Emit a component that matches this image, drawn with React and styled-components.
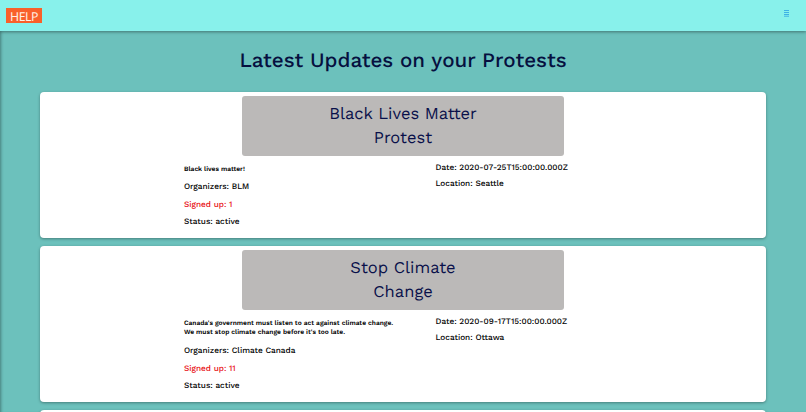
import React from "react";
import styled, { createGlobalStyle } from "styled-components";

const protests = [
  {
    title: ["Black Lives Matter", "Protest"],
    description: ["Black lives matter!"],
    organizers: "BLM",
    signedUp: 1,
    status: "active",
    date: "2020-07-25T15:00:00.000Z",
    location: "Seattle",
  },
  {
    title: ["Stop Climate", "Change"],
    description: [
      "Canada's government must listen to act against climate change.",
      "We must stop climate change before it's too late.",
    ],
    organizers: "Climate Canada",
    signedUp: 11,
    status: "active",
    date: "2020-09-17T15:00:00.000Z",
    location: "Ottawa",
  },
];

const Navbar = () => (
  <NavWrapper>
    <Logo>HELP</Logo>
    <MenuIcon viewBox="0 0 5 7">
      <path d="M0 .5h5M0 2.5h5M0 4.5h5M0 6.2h5" />
    </MenuIcon>
  </NavWrapper>
);

const ProtestCard = ({ protest }) => (
  <Card>
    <CardTitle>
      {protest.title.map((line) => (
        <span key={line}>{line}</span>
      ))}
    </CardTitle>
    <CardBody>
      <Details>
        <Description>
          {protest.description.map((line) => (
            <span key={line}>{line}</span>
          ))}
        </Description>
        <Info>Organizers: {protest.organizers}</Info>
        <Info $alert>Signed up: {protest.signedUp}</Info>
        <Info>Status: {protest.status}</Info>
      </Details>
      <Place>
        <DateInfo>Date: {protest.date}</DateInfo>
        <Info>Location: {protest.location}</Info>
      </Place>
    </CardBody>
  </Card>
);

export default function App() {
  return (
    <>
      <GlobalStyle />
      <Page>
        <Navbar />
        <Heading>Latest Updates on your Protests</Heading>
        <CardList>
          {protests.map((protest) => (
            <ProtestCard key={protest.date} protest={protest} />
          ))}
          <Card />
        </CardList>
      </Page>
    </>
  );
}

const GlobalStyle = createGlobalStyle`
  * {
    box-sizing: border-box;
  }
  body {
    margin: 0;
    overflow: hidden;
    font-family: "Work Sans", Inter, sans-serif;
    text-rendering: geometricPrecision;
  }
`;

const Page = styled.div`
  height: 412px;
  overflow: hidden;
  background: #6cc1bc;
  box-shadow: inset 3px 0 3px -2px rgba(0, 0, 0, 0.35);
`;

const NavWrapper = styled.nav`
  position: relative;
  display: flex;
  justify-content: space-between;
  align-items: flex-start;
  height: 31px;
  padding: 8px 17px 0 6px;
  background: #88f1eb;
  box-shadow: 0 1px 3px rgba(0, 0, 0, 0.4);
`;

const Logo = styled.div`
  width: 36px;
  height: 15px;
  background: #f9602a;
  color: #fff0e4;
  font: 400 12.3px/17px "Noto Sans", sans-serif;
  letter-spacing: -0.5px;
  text-align: center;
`;

const MenuIcon = styled.svg`
  width: 5px;
  height: 7px;
  margin-top: 2px;
  stroke: #35a9e4;
  stroke-width: 0.9;
`;

const Heading = styled.h1`
  margin: 0;
  height: 61px;
  color: #06103f;
  font-size: 20.6px;
  font-weight: 500;
  line-height: 61px;
  text-align: center;
`;

const CardList = styled.main`
  display: flex;
  flex-direction: column;
  gap: 8px;
  padding: 0 40px;
`;

const Card = styled.section`
  min-height: 60px;
  padding: 4px 0 11px;
  border-radius: 4px;
  background: #fff;
  box-shadow: 0 1px 3px rgba(0, 0, 0, 0.35);
`;

const CardTitle = styled.h2`
  display: flex;
  flex-direction: column;
  align-items: center;
  width: 322px;
  height: 59.5px;
  margin: 0 auto;
  padding-top: 7px;
  border-radius: 3px;
  background: #bbb9b8;
  color: #09104a;
  font-size: 16.5px;
  font-weight: 400;
  line-height: 24px;
`;

const CardBody = styled.div`
  display: flex;
  padding-left: 144px;
`;

const Details = styled.div`
  width: 251.5px;
  padding-top: 9px;
`;

const Description = styled.div`
  display: flex;
  flex-direction: column;
  margin-bottom: 8.3px;
  color: #000;
  font-size: 6.64px;
  font-weight: 600;
  line-height: 9.5px;
  white-space: nowrap;
`;

const Info = styled.div`
  height: 10px;
  margin-bottom: 7.5px;
  color: ${(props) => (props.$alert ? "#e80f14" : "#000")};
  font-size: 8.24px;
  font-weight: 500;
  line-height: 10px;
  white-space: nowrap;

  &:last-child {
    margin-bottom: 0;
  }
`;

const Place = styled.div`
  padding-top: 7px;
`;

const DateInfo = styled(Info)`
  margin-bottom: 6px;
`;
